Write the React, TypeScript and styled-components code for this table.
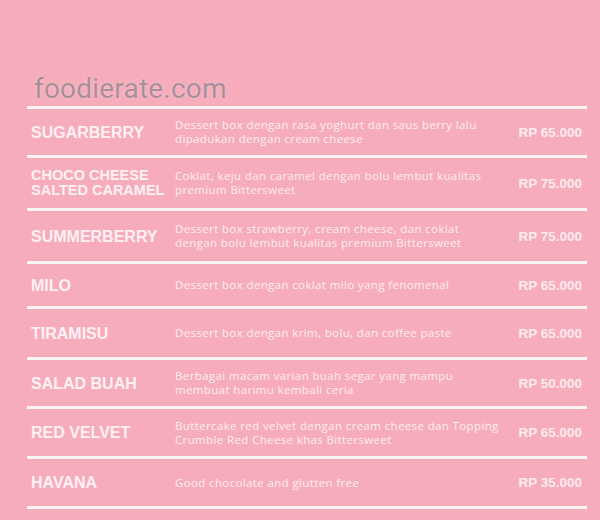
import React from "react";
import styled, { createGlobalStyle } from "styled-components";

const Global = createGlobalStyle`
  html, body { margin: 0; padding: 0; background: #f7acbb; }
  body { width: 600px; height: 520px; overflow: hidden; }
`;

const Page = styled.div`
  width: 600px;
  height: 520px;
  background: #f7acbb;
  padding-top: 73px;
  box-sizing: border-box;
`;

const Watermark = styled.div`
  font-family: Roboto, "Liberation Sans", sans-serif;
  font-size: 28px;
  line-height: 32px;
  color: #a88f99;
  padding-left: 34px;
  text-shadow: 0 0 2px rgba(255, 255, 255, 0.5);
  letter-spacing: 0.2px;
`;

const Menu = styled.div`
  margin-left: 27px;
  width: 560px;
  margin-top: 1px;
  border-top: 3px solid #fdf3f5;
`;

const Row = styled.div<{ $h: number }>`
  display: flex;
  align-items: center;
  height: ${(p) => p.$h}px;
  border-bottom: 3px solid #fdf3f5;
`;

const Name = styled.div<{ $small?: boolean }>`
  width: 148px;
  flex-shrink: 0;
  padding-left: 4px;
  box-sizing: border-box;
  font-family: "Liberation Sans", Arial, sans-serif;
  font-weight: 700;
  font-size: ${(p) => (p.$small ? "14.5px" : "16px")};
  line-height: 15px;
  color: #fff1f4;
  white-space: nowrap;
`;

const Desc = styled.div`
  flex: 1;
  font-family: "Open Sans", sans-serif;
  font-size: 11.5px;
  line-height: 14px;
  color: #feeef2;
  letter-spacing: 0.37px;
  white-space: nowrap;
`;

const Price = styled.div`
  padding-right: 5px;
  font-family: "Liberation Sans", Arial, sans-serif;
  font-weight: 700;
  font-size: 13.5px;
  color: #fdebef;
  white-space: nowrap;
`;

const items = [
  { name: ["SUGARBERRY"], desc: ["Dessert box dengan rasa yoghurt dan saus berry lalu", "dipadukan dengan cream cheese"], price: "RP 65.000", h: 46 },
  { name: ["CHOCO CHEESE", "SALTED CARAMEL"], desc: ["Coklat, keju dan caramel dengan bolu lembut kualitas", "premium Bittersweet"], price: "RP 75.000", h: 50, small: true },
  { name: ["SUMMERBERRY"], desc: ["Dessert box strawberry, cream cheese, dan coklat", "dengan bolu lembut kualitas premium Bittersweet"], price: "RP 75.000", h: 50 },
  { name: ["MILO"], desc: ["Dessert box dengan coklat milo yang fenomenal"], price: "RP 65.000", h: 42 },
  { name: ["TIRAMISU"], desc: ["Dessert box dengan krim, bolu, dan coffee paste"], price: "RP 65.000", h: 48 },
  { name: ["SALAD BUAH"], desc: ["Berbagai macam varian buah segar yang mampu", "membuat harimu kembali ceria"], price: "RP 50.000", h: 46 },
  { name: ["RED VELVET"], desc: ["Buttercake red velvet dengan cream cheese dan Topping", "Crumble Red Cheese khas Bittersweet"], price: "RP 65.000", h: 47 },
  { name: ["HAVANA"], desc: ["Good chocolate and glutten free"], price: "RP 35.000", h: 47 },
];

export default function App() {
  return (
    <Page>
      <Global />
      <Watermark>foodierate.com</Watermark>
      <Menu>
        {items.map((it) => (
          <Row key={it.name.join()} $h={it.h}>
            <Name $small={it.small}>
              {it.name.map((n, i) => (
                <div key={i}>{n}</div>
              ))}
            </Name>
            <Desc>
              {it.desc.map((d, i) => (
                <div key={i}>{d}</div>
              ))}
            </Desc>
            <Price>{it.price}</Price>
          </Row>
        ))}
      </Menu>
    </Page>
  );
}
